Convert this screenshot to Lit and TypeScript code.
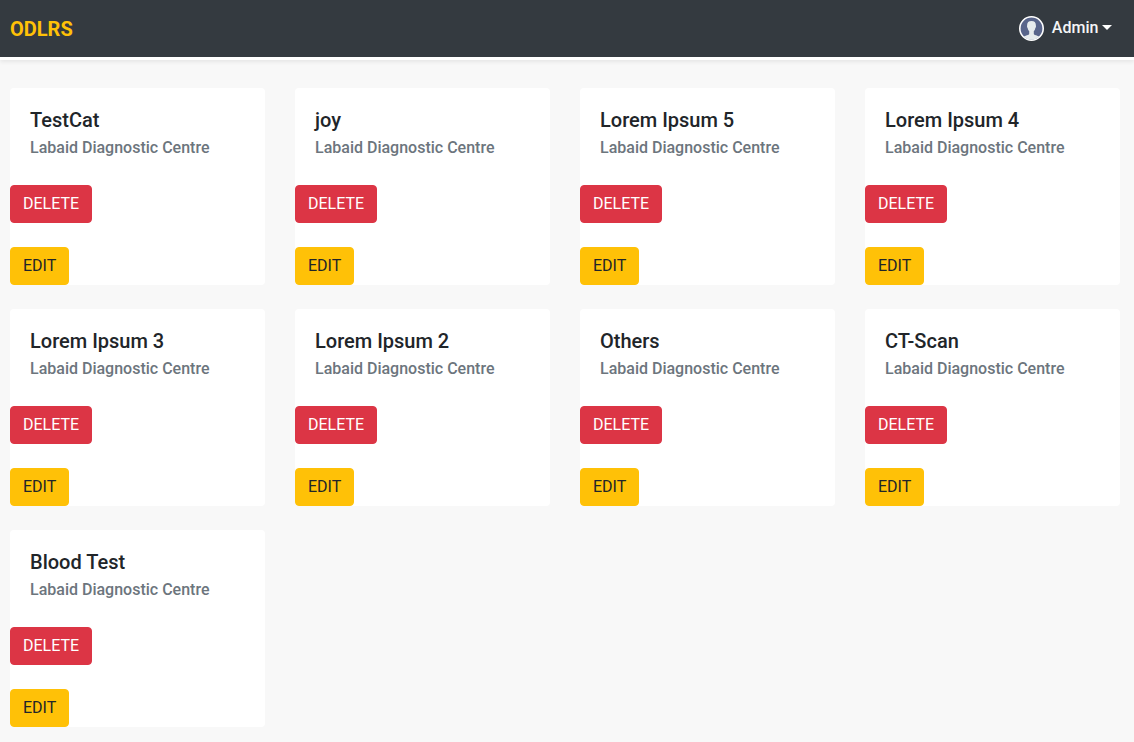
import { LitElement, html, css } from "lit";
import { customElement } from "lit/decorators.js";

const CATEGORIES = [
  "TestCat", "joy", "Lorem Ipsum 5", "Lorem Ipsum 4", "Lorem Ipsum 3",
  "Lorem Ipsum 2", "Others", "CT-Scan", "Blood Test",
];

@customElement("app-root")
export class AppRoot extends LitElement {
  static styles = css`
    :host { display: block; min-height: 742px; background: #f8f8f8; font: 400 16px/24px Roboto, sans-serif; color: #212529; }
    * { box-sizing: border-box; }
    header { height: 60px; background: #343a40; border-bottom: 3px solid #fff; box-shadow: 0 2px 4px rgba(0,0,0,.075); display: flex; align-items: center; justify-content: space-between; padding: 0 22px 0 10px; }
    .brand { color: #ffc107; font-weight: 700; font-size: 20px; line-height: 30px; padding-top: 1px; }
    .user { display: flex; align-items: center; color: #fff; font-weight: 500; }
    .avatar { width: 25px; height: 25px; margin-right: 7.8px; display: block; }
    .name { padding-bottom: 2px; color: #f4f5f6; }
    .caret { margin-left: 3.6px; margin-bottom: 3px; border: 5px solid transparent; border-top-color: #fff; border-bottom: 0; }
    main { display: grid; grid-template-columns: repeat(4, 255px); gap: 24px 30px; padding: 28px 10px 15px; }
    .card { height: 197px; background: #fff; border-radius: 4px; display: flex; flex-direction: column; align-items: flex-start; }
    .body { height: 97px; padding: 20px 20px 0; }
    h5 { margin: 0; font-size: 20px; line-height: 24px; font-weight: 500; color: #212529; }
    h6 { margin: 6px 0 0; font-size: 16px; line-height: 20px; font-weight: 500; color: #6c757d; }
    button { font: 400 16px/24px Roboto, sans-serif; height: 38px; padding: 6px 12px; border: 1px solid; border-radius: 4px; }
    .delete { background: #dc3545; border-color: #dc3545; color: #fff; margin-bottom: 24px; }
    .edit { background: #ffc107; border-color: #ffc107; color: #212529; }
  `;

  render() {
    return html`
      <header>
        <div class="brand">ODLRS</div>
        <div class="user">
          <svg class="avatar" viewBox="0 0 25 25">
            <circle cx="12.5" cy="12.5" r="11.7" fill="#59658b" stroke="#fff" stroke-width="1.6" />
            <path d="M12.5 5C9.4 5 8 6.7 8.1 9.5c0 .5-.2.8 0 1.6.3.9.6 1 .8 1.8.2.9.6 1.6 1.3 2.2v2.6c0 1.5-3.9 1.7-5.4 2.9a10.9 10.9 0 0 0 15.4 0c-1.5-1.2-5.4-1.4-5.4-2.9v-2.6c.7-.6 1.1-1.3 1.3-2.2.2-.8.5-.9.8-1.8.2-.8 0-1.1 0-1.6C17 6.7 15.6 5 12.5 5z" fill="#e6ebed" />
          </svg>
          <span class="name">Admin</span><span class="caret"></span>
        </div>
      </header>
      <main>
        ${CATEGORIES.map((name) => html`
          <section class="card">
            <div class="body"><h5>${name}</h5><h6>Labaid Diagnostic Centre</h6></div>
            <button class="delete">DELETE</button>
            <button class="edit">EDIT</button>
          </section>`)}
      </main>
    `;
  }
}
